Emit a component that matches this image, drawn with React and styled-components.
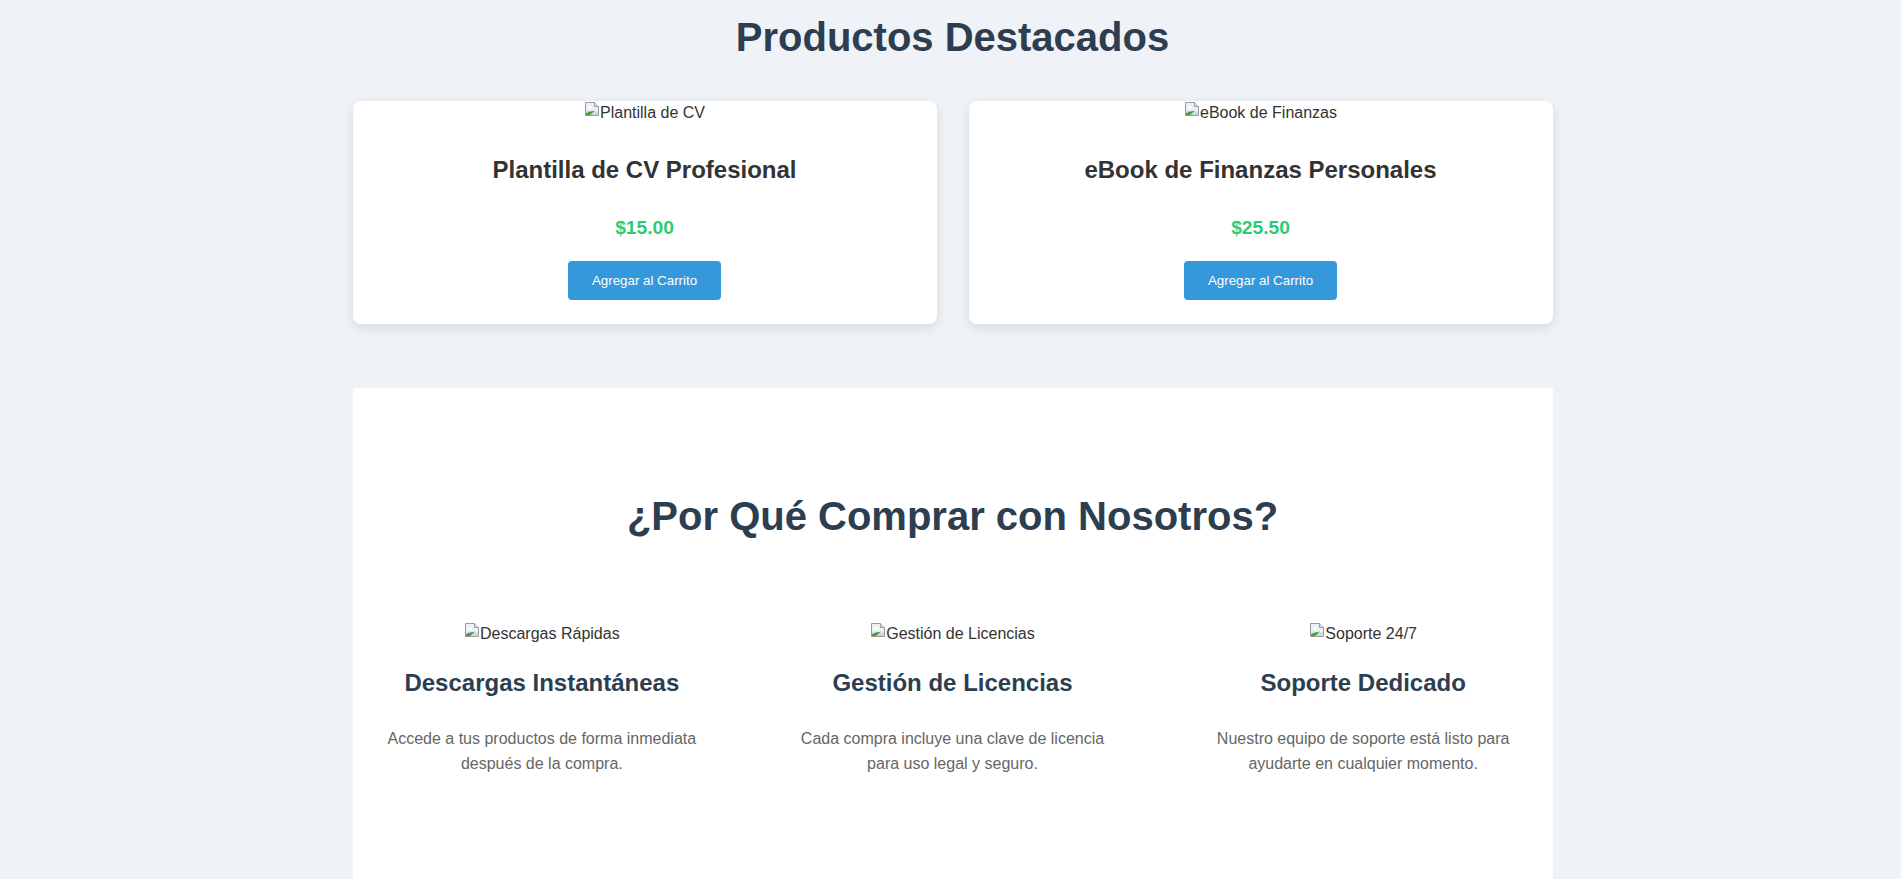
import React from "react";
import styled, { createGlobalStyle } from "styled-components";

const GlobalStyle = createGlobalStyle`
  * {
    box-sizing: border-box;
  }
  body {
    margin: 0;
    background-color: #eff2f7;
    color: #333;
    font-family: "Liberation Sans", Arial, sans-serif;
  }
`

const Page = styled.main`
  max-width: 1200px;
  margin: 0 auto;
  padding-top: 15px;
  position: relative;
  left: 2px;
`

const SectionTitle = styled.h2`
  margin: 0 0 ${(p) => p.$gap || 41}px;
  font-size: 40px;
  font-weight: 700;
  color: #2c3e50;
  text-align: center;
`

const ProductGrid = styled.div`
  display: grid;
  grid-template-columns: repeat(2, 1fr);
  gap: 32px;
`

const Card = styled.div`
  background: #fff;
  border-radius: 8px;
  box-shadow: 0 4px 12px rgba(0, 0, 0, 0.1);
  padding: 0 24px 24px;
  text-align: center;
`

const AltImage = styled.div`
  display: flex;
  justify-content: center;
  align-items: flex-start;
  font-size: 16px;
  color: #333;
  height: 22px;
  margin-top: ${(p) => p.$offset || 0}px;

  span {
    padding-top: 3px;
    line-height: 18.4px;
  }
`

const CardTitle = styled.h3`
  margin: 33px 0 0;
  font-size: 24px;
  font-weight: 700;
  color: #333;
`

const Price = styled.p`
  margin: 33px 0 0;
  font-size: 19.2px;
  font-weight: 700;
  color: #2ecc71;
`

const CartButton = styled.button`
  margin-top: 22px;
  padding: 12.2px 24px;
  border: none;
  border-radius: 4px;
  background-color: #3498db;
  color: #fff;
  font-family: "Liberation Sans", Arial, sans-serif;
  font-size: 13.333px;
  cursor: pointer;
`

const WhySection = styled.section`
  margin-top: 64px;
  background: #fff;
  padding: 106px 0;
`

const FeatureGrid = styled.div`
  display: grid;
  grid-template-columns: repeat(3, 1fr);
  gap: 32px;
`

const Feature = styled.div`
  padding: 32px;
  text-align: center;
`

const FeatureTitle = styled.h3`
  margin: 24.5px 0 0;
  font-size: 24px;
  font-weight: 700;
  color: #2c3e50;
`

const FeatureText = styled.p`
  margin: 29px 0 0;
  font-size: 16px;
  line-height: 1.6;
  color: #666;
`

function BrokenIcon() {
  return (
    <svg width="16" height="16" viewBox="0 0 16 16">
      <path d="M1.5 1.5H10.5L14.5 5.5V14.5H1.5Z" fill="#eef1f4" stroke="#9a9a9a" />
      <path d="M10.5 1.5V5.5H14.5" fill="#dfe3e8" stroke="#9a9a9a" />
      <path d="M2 10.5C4 9 6 9 8 10.5L14 10.5V14H2Z" fill="#c9d9ea" />
      <ellipse cx="6" cy="6.5" rx="2.2" ry="1.2" fill="#fff" />
      <path d="M2 14L2 12.5C5 10.5 8 10 11 9.5L6 14Z" fill="#4f9a36" />
    </svg>
  );
}

const products = [
  { alt: "Plantilla de CV", name: "Plantilla de CV Profesional", price: "$15.00" },
  { alt: "eBook de Finanzas", name: "eBook de Finanzas Personales", price: "$25.50" },
];

const features = [
  {
    alt: "Descargas Rápidas",
    title: "Descargas Instantáneas",
    text: "Accede a tus productos de forma inmediata después de la compra.",
  },
  {
    alt: "Gestión de Licencias",
    title: "Gestión de Licencias",
    text: "Cada compra incluye una clave de licencia para uso legal y seguro.",
  },
  {
    alt: "Soporte 24/7",
    title: "Soporte Dedicado",
    text: "Nuestro equipo de soporte está listo para ayudarte en cualquier momento.",
  },
];

function App() {
  return (
    <>
      <GlobalStyle />
      <Page>
        <SectionTitle>Productos Destacados</SectionTitle>
        <ProductGrid>
          {products.map((p) => (
            <Card key={p.name}>
              <AltImage>
                <BrokenIcon />
                <span>{p.alt}</span>
              </AltImage>
              <CardTitle>{p.name}</CardTitle>
              <Price>{p.price}</Price>
              <CartButton>Agregar al Carrito</CartButton>
            </Card>
          ))}
        </ProductGrid>

        <WhySection>
          <SectionTitle $gap={49}>¿Por Qué Comprar con Nosotros?</SectionTitle>
          <FeatureGrid>
            {features.map((f) => (
              <Feature key={f.title}>
                <AltImage $offset={2}>
                  <BrokenIcon />
                  <span>{f.alt}</span>
                </AltImage>
                <FeatureTitle>{f.title}</FeatureTitle>
                <FeatureText>{f.text}</FeatureText>
              </Feature>
            ))}
          </FeatureGrid>
        </WhySection>
      </Page>
    </>
  );
}

export default App;
